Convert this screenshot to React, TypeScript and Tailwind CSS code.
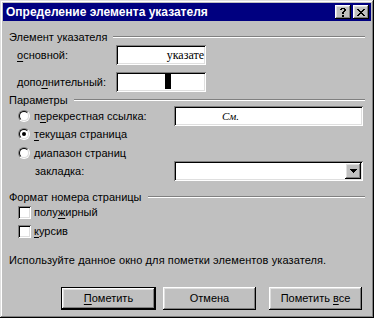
import React from 'react';

const raised = 'shadow-[inset_-1px_-1px_#000,inset_1px_1px_#fff,inset_-2px_-2px_#808080,inset_2px_2px_#dfdfdf]';
const sunken = 'shadow-[inset_1px_1px_#808080,inset_-1px_-1px_#fff,inset_2px_2px_#000,inset_-2px_-2px_#dfdfdf]';

function Px({ rows, w, h }: { rows: string[]; w: number; h: number }) {
  return (
    <svg width={w} height={h} viewBox={`0 0 ${w} ${h}`} shapeRendering="crispEdges">
      {rows.flatMap((r, y) =>
        r.split('').map((c, x) => (c === 'x' ? <rect key={`${x}-${y}`} x={x} y={y} width={1} height={1} fill="#000" /> : null))
      )}
    </svg>
  );
}

function CapBtn({ kind }: { kind: 'help' | 'close' }) {
  return (
    <div className={`w-[16px] h-[14px] bg-[#c0c0c0] flex items-center justify-center ${raised}`}>
      {kind === 'close' ? (
        <Px w={8} h={7} rows={['xx....xx', '.xx..xx.', '..xxxx..', '...xx...', '..xxxx..', '.xx..xx.', 'xx....xx']} />
      ) : (
        <Px w={6} h={9} rows={['.xxxx.', 'xx..xx', '....xx', '...xx.', '..xx..', '..xx..', '......', '..xx..', '..xx..']} />
      )}
    </div>
  );
}

function Group({ label, className = '' }: { label: string; className?: string }) {
  return (
    <div className={`flex items-center h-[14px] ${className}`}>
      <span className="whitespace-nowrap">{label}</span>
      <div className="flex-1 ml-[6px] h-[2px] border-t border-t-[#808080] border-b border-b-white" />
    </div>
  );
}

function Radio({ checked }: { checked?: boolean }) {
  return (
    <span className="w-[12px] h-[12px] shrink-0 rounded-full border border-t-[#808080] border-l-[#808080] border-b-white border-r-white">
      <span className="w-full h-full rounded-full bg-white border border-t-black border-l-black border-b-[#dfdfdf] border-r-[#dfdfdf] flex items-center justify-center">
        {checked && <span className="w-[4px] h-[4px] rounded-full bg-black" />}
      </span>
    </span>
  );
}

function Check() {
  return <span className={`w-[13px] h-[13px] shrink-0 bg-white ${sunken}`} />;
}

const U = ({ c }: { c: string }) => <span className="underline underline-offset-[2px]">{c}</span>;

export default function App() {
  return (
    <div className={`w-[374px] h-[318px] bg-[#c0c0c0] p-[3px] text-black text-[11px] leading-none font-['Liberation_Sans',Arial,sans-serif] shadow-[inset_-1px_-1px_#000,inset_1px_1px_#dfdfdf,inset_-2px_-2px_#808080,inset_2px_2px_#fff] select-none`}>
      <div className="h-[18px] bg-[#000080] flex items-center pl-[3px] pr-[2px]">
        <span className="flex-1 text-white font-bold text-[12px]">Определение элемента указателя</span>
        <CapBtn kind="help" />
        <div className="ml-[2px]"><CapBtn kind="close" /></div>
      </div>

      <div className="flex flex-col px-[6px]">
        <Group label="Элемент указателя" className="mt-[9px]" />
        <div className="flex items-center h-[20px] mt-[1px]">
          <span className="ml-[8px] w-[99px]"><U c="о" />сновной:</span>
          <div className={`w-[90px] h-[20px] bg-white overflow-hidden flex items-center justify-end pr-[2px] ${sunken}`}>
            <span className="whitespace-nowrap font-['Liberation_Serif','Times_New_Roman',serif] text-[12px]">указате</span>
          </div>
        </div>
        <div className="flex items-center h-[20px] mt-[7px]">
          <span className="ml-[8px] w-[99px]">допо<U c="л" />нительный:</span>
          <div className={`w-[90px] h-[20px] bg-white pl-[49px] pt-[2px] ${sunken}`}>
            <div className="w-[6px] h-[15px] bg-black" />
          </div>
        </div>

        <div className="flex items-center h-[12px] mt-[2px]">
          <span>Параметры</span>
          <div className="flex-1 ml-[6px] h-[2px] border-t border-t-[#808080] border-b border-b-white" />
        </div>
        <div className="flex items-center h-[20px]">
          <div className="flex items-center gap-[4px] ml-[9px] w-[156px]">
            <Radio />
            <span>п<U c="е" />рекрестная ссылка:</span>
          </div>
          <div className={`w-[189px] h-[20px] bg-white flex items-center pl-[48px] ${sunken}`}>
            <span className="italic font-['Liberation_Serif','Times_New_Roman',serif] text-[11px]">См.</span>
          </div>
        </div>
        <div className="flex items-center h-[16px] gap-[4px] ml-[9px]">
          <Radio checked />
          <span><U c="т" />екущая страница</span>
        </div>
        <div className="flex items-center h-[16px] gap-[4px] ml-[9px] mt-[3px]">
          <Radio />
          <span><U c="д" />иапазон страниц</span>
        </div>
        <div className="flex items-center h-[20px]">
          <span className="ml-[26px] w-[139px]">закладка:</span>
          <div className={`w-[189px] h-[20px] bg-white flex justify-end p-[2px] ${sunken}`}>
            <div className={`w-[16px] h-[16px] bg-[#c0c0c0] flex items-center justify-center ${raised}`}>
              <Px w={7} h={4} rows={['xxxxxxx', '.xxxxx.', '..xxx..', '...x...']} />
            </div>
          </div>
        </div>

        <Group label="Формат номера страницы" className="mt-[9px]" />
        <div className="flex items-center h-[14px] mt-[1px] ml-[9px] gap-[3px]">
          <Check />
          <span>полу<U c="ж" />ирный</span>
        </div>
        <div className="flex items-center h-[14px] mt-[5px] ml-[9px] gap-[3px]">
          <Check />
          <span><U c="к" />урсив</span>
        </div>

        <div className="flex items-center h-[14px] mt-[15px] whitespace-nowrap tracking-[0.1px]">
          Используйте данное окно для пометки элементов указателя.
        </div>

        <div className="flex items-center h-[23px] mt-[20px] ml-[52px]">
          <div className="w-[95px] h-[23px] border border-black">
            <div className={`w-full h-full bg-[#c0c0c0] flex items-center justify-center ${raised}`}>
              <span><U c="П" />ометить</span>
            </div>
          </div>
          <div className={`ml-[7px] w-[93px] h-[23px] bg-[#c0c0c0] flex items-center justify-center ${raised}`}>
            Отмена
          </div>
          <div className={`ml-[13px] w-[93px] h-[23px] bg-[#c0c0c0] flex items-center justify-center ${raised}`}>
            <span>Пометить <U c="в" />се</span>
          </div>
        </div>
      </div>
    </div>
  );
}
